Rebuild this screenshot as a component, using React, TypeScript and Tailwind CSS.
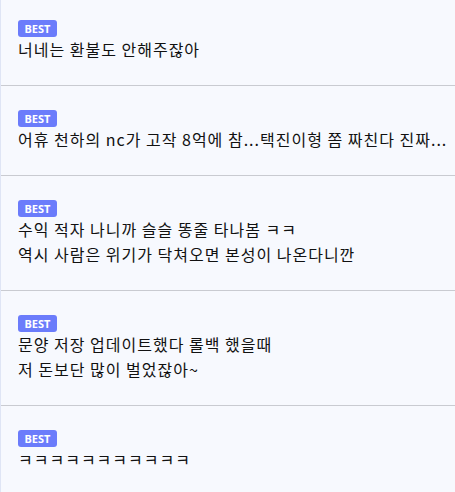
const posts: { lines: string[] }[] = [
  { lines: ['너네는 환불도 안해주잖아'] },
  { lines: ['어휴 천하의 nc가 고작 8억에 참...택진이형 쫌 짜친다 진짜...'] },
  { lines: ['수익 적자 나니까 슬슬 똥줄 타나봄 ㅋㅋ', '역시 사람은 위기가 닥쳐오면 본성이 나온다니깐'] },
  { lines: ['문양 저장 업데이트했다 롤백 했을때', '저 돈보단 많이 벌었잖아~'] },
  { lines: ['ㅋㅋㅋㅋㅋㅋㅋㅋㅋㅋㅋ'] },
];

export default function App() {
  return (
    <div
      className="w-[455px] h-[492px] overflow-hidden bg-[#f7f9fe] border-l border-[#dfe5f5]"
      style={{ fontFamily: '"Noto Sans CJK KR", "Noto Sans", sans-serif' }}
    >
      {posts.map((post, i) => (
        <div
          key={i}
          className={`border-b border-[#c9cbd1] px-[17px] pb-[23px] ${i === 0 ? 'pt-5' : 'pt-6'}`}
        >
          {/* best badge */}
          <div className="flex">
            <span
              className="h-[17px] w-[39px] rounded-[3px] bg-[#6b7cfb] text-white text-[11px] font-bold leading-[17px] text-center"
              style={{ fontFamily: '"Noto Sans", sans-serif' }}
            >
              BEST
            </span>
          </div>
          <div className="text-[16px] leading-[25px] tracking-[1px] text-[#111111] whitespace-nowrap">
            {post.lines.map((line, j) => (
              <p key={j}>{line}</p>
            ))}
          </div>
        </div>
      ))}
    </div>
  );
}
